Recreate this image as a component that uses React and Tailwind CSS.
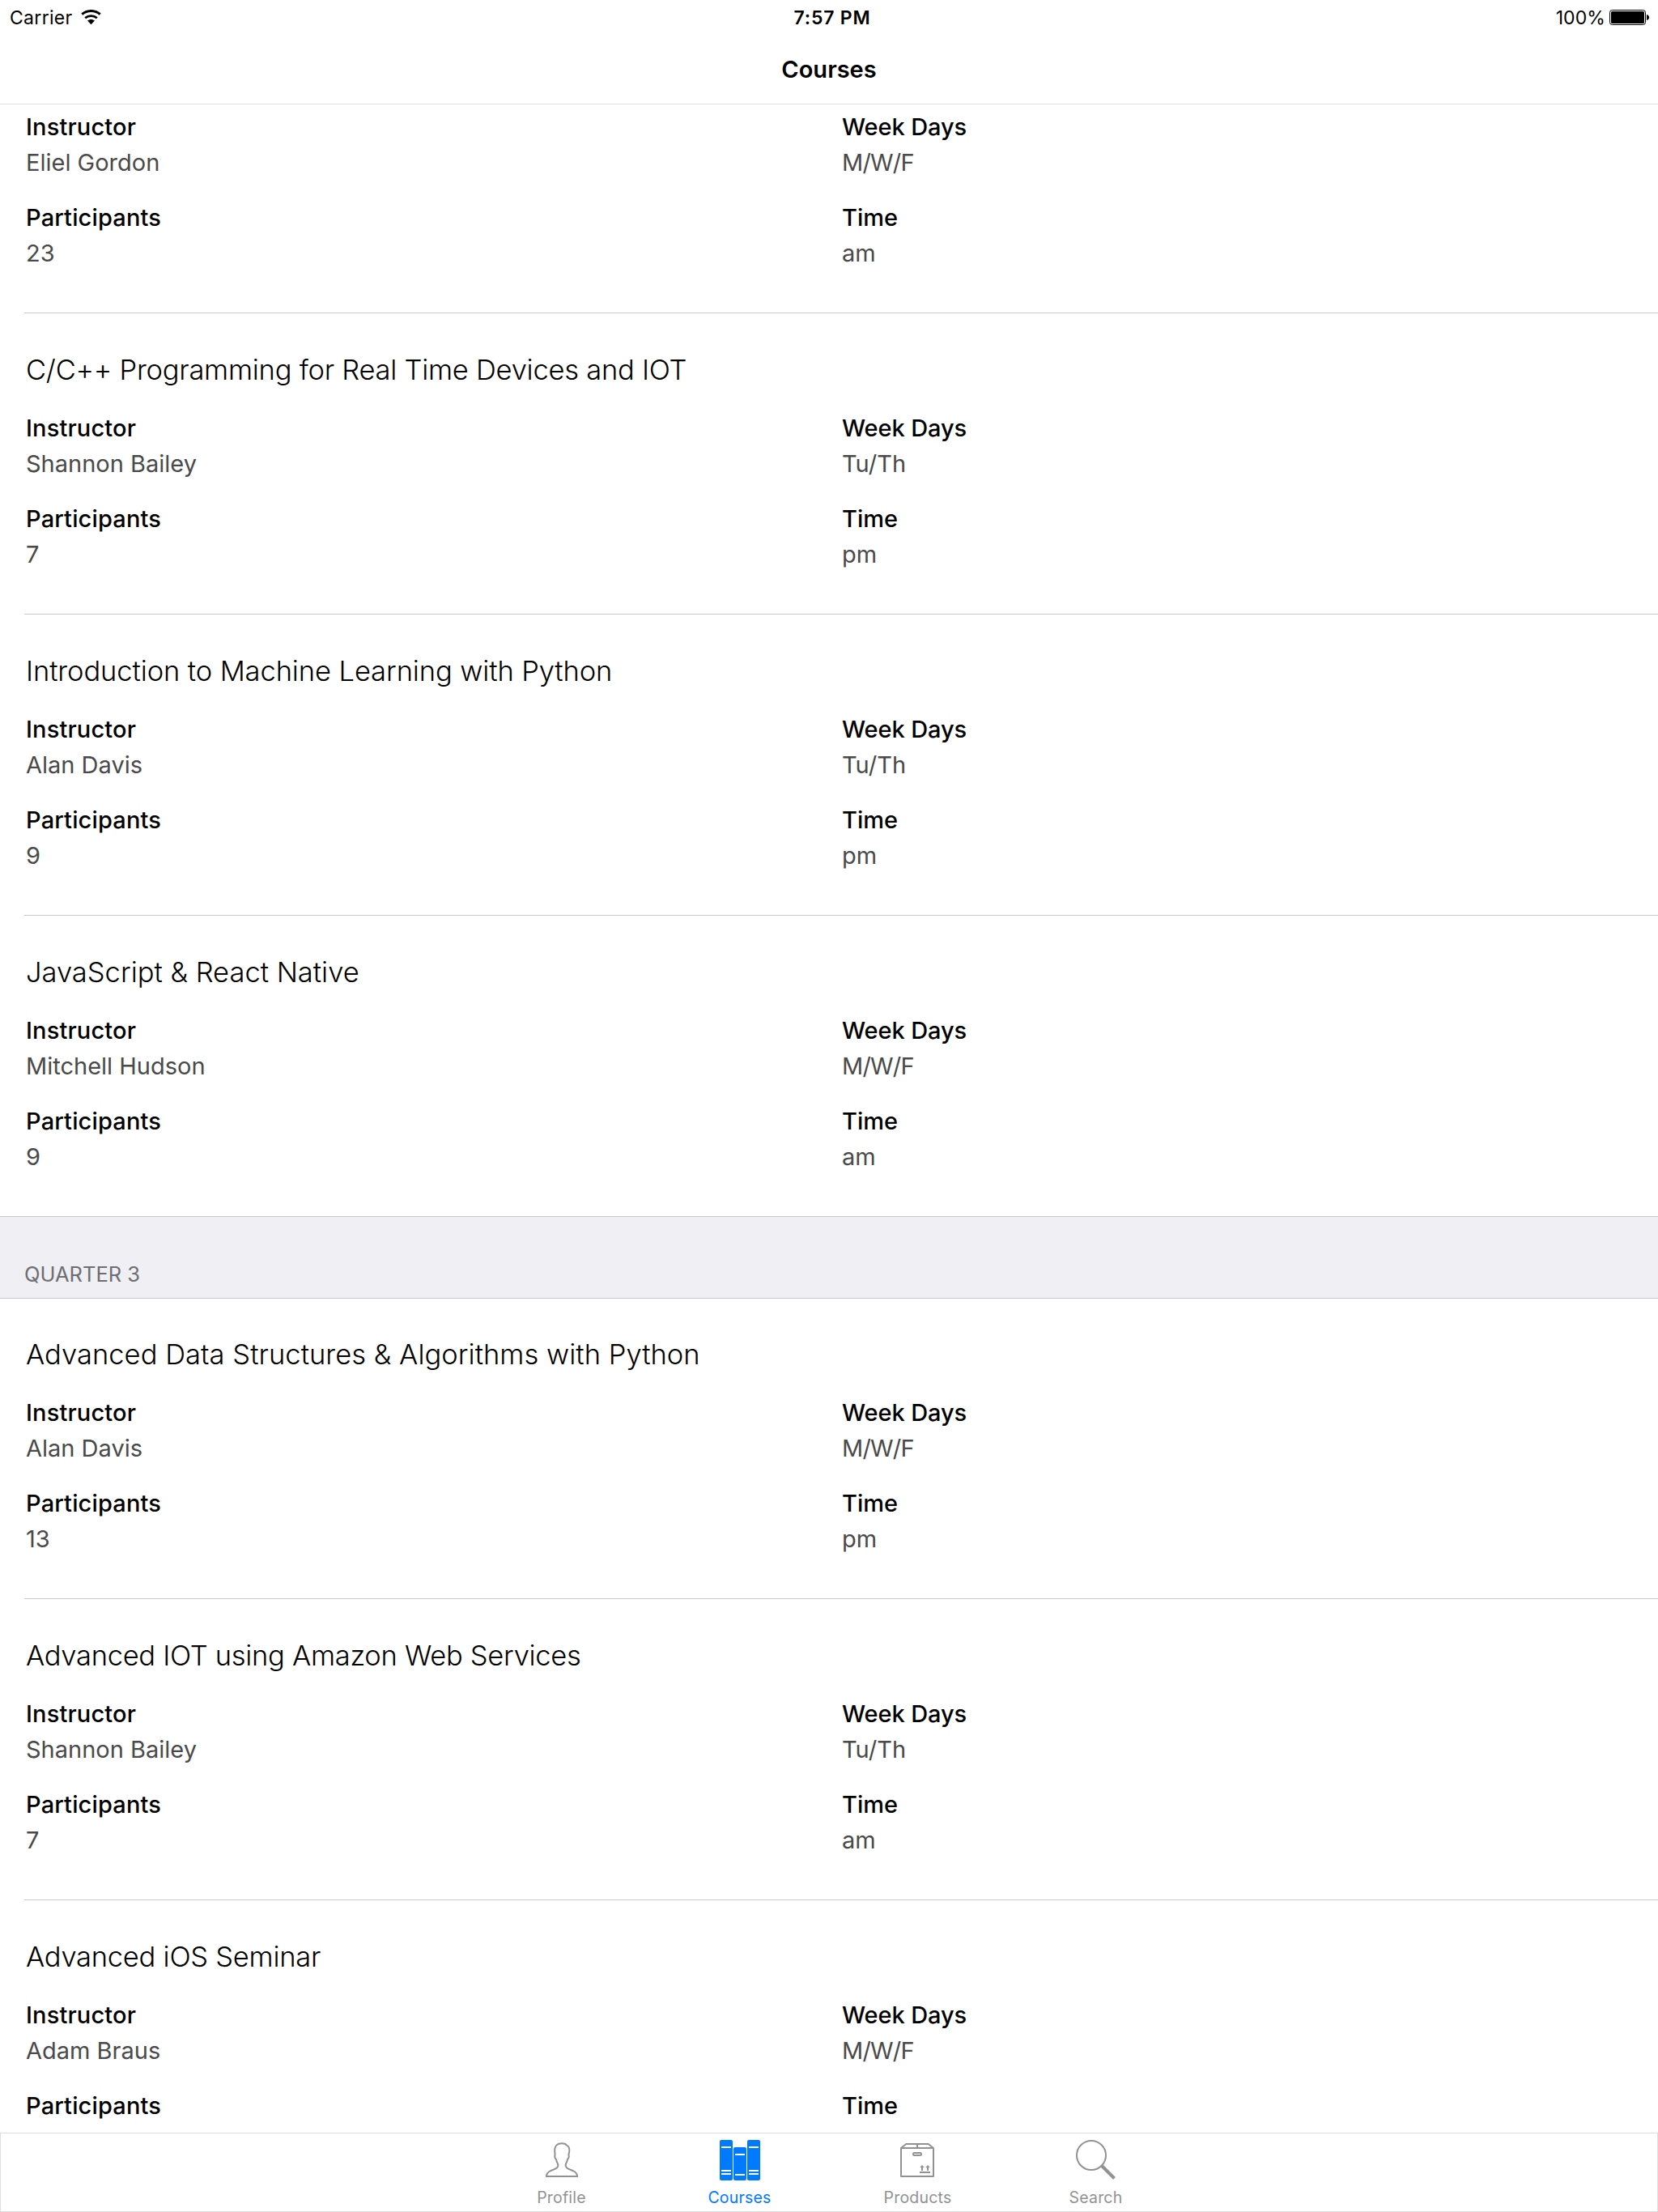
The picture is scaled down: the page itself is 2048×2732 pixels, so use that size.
import React from "react";

const quarterTwo = [
  { instructor: "Eliel Gordon", days: "M/W/F", participants: 23, time: "am" },
  { title: "C/C++ Programming for Real Time Devices and IOT", tracking: "tracking-[-0.25px]", instructor: "Shannon Bailey", days: "Tu/Th", participants: 7, time: "pm" },
  { title: "Introduction to Machine Learning with Python", tracking: "tracking-[-0.1px]", instructor: "Alan Davis", days: "Tu/Th", participants: 9, time: "pm" },
  { title: "JavaScript & React Native", tracking: "tracking-[0px]", instructor: "Mitchell Hudson", days: "M/W/F", participants: 9, time: "am" },
];

const quarterThree = [
  { title: "Advanced Data Structures & Algorithms with Python", tracking: "tracking-[0.04px]", instructor: "Alan Davis", days: "M/W/F", participants: 13, time: "pm" },
  { title: "Advanced IOT using Amazon Web Services", tracking: "tracking-[-0.29px]", instructor: "Shannon Bailey", days: "Tu/Th", participants: 7, time: "am" },
  { title: "Advanced iOS Seminar", tracking: "tracking-[-0.25px]", instructor: "Adam Braus", days: "M/W/F", participants: 17, time: "am" },
];

function Field({ label, value, labelTracking = "tracking-[0.15px]", valueTracking = "tracking-[0px]" }) {
  return (
    <div className="flex flex-col gap-1">
      <dt className={`text-[29px] leading-10 font-[530] text-black ${labelTracking}`}>{label}</dt>
      <dd className={`text-[29px] leading-10 font-normal text-[#4a4a4a] ${valueTracking}`}>{value}</dd>
    </div>
  );
}

function Course({ course, last }) {
  return (
    <article className="flex shrink-0 flex-col">
      {course.title && (
        <h2 className={`px-8 pt-12 pb-[30px] text-[34.5px] leading-11 font-[280] whitespace-nowrap text-black ${course.tracking}`}>
          {course.title}
        </h2>
      )}
      <dl className={course.title ? "grid grid-cols-2 gap-y-7 px-8 pb-[53px]" : "grid grid-cols-2 gap-y-7 px-8 pt-2 pb-[53px]"}>
        <Field label="Instructor" value={course.instructor} />
        <div className="pl-4">
          <Field label="Week Days" value={course.days} labelTracking="tracking-[-0.1px]" valueTracking={course.days === "M/W/F" ? "tracking-[-0.8px]" : "tracking-[0px]"} />
        </div>
        <Field label="Participants" value={course.participants} />
        <div className="pl-4">
          <Field label="Time" value={course.time} labelTracking="tracking-[0px]" />
        </div>
      </dl>
      <div className={last ? "h-px bg-[#c8c7cc]" : "ml-[30px] h-px bg-[#c8c7cc]"} />
    </article>
  );
}

function WifiIcon() {
  return (
    <svg className="h-[19px] w-[25px]" viewBox="0 0 25 19" fill="none" stroke="black">
      <path d="M1.3 5.6C7.6 .1 17.4 .1 23.7 5.6" strokeWidth="3" />
      <path d="M5.2 10.3C9.4 6.7 15.6 6.7 19.8 10.3" strokeWidth="2.7" />
      <path d="M8 13.6C10.6 11.5 14.4 11.5 17 13.6L12.5 18.2Z" fill="black" stroke="none" />
    </svg>
  );
}

function BatteryIcon() {
  return (
    <svg className="h-[19px] w-[49px]" viewBox="0 0 49 19">
      <rect x=".5" y=".5" width="44" height="18" rx="3" fill="none" stroke="black" />
      <rect x="2" y="2" width="41" height="15" rx="1.5" />
      <path d="M46 6c2 .4 3 1.800 3 3.500s-1 3.100-3 3.500z" />
    </svg>
  );
}

function ProfileIcon() {
  return (
    <svg className="size-[50px]" viewBox="0 0 50 50" fill="none" stroke="currentColor" strokeWidth="2">
      <path d="M6 45H44C44 41.500 42.500 39.800 39.300 38.300C36.500 36.900 33 36.300 31 34.300C29.300 32.500 29.400 30.500 30.300 28.800C31.300 27 31.800 25.500 32.100 23.600C33.400 23.200 34.300 20 33.400 18.200C34.600 14 34.600 10.500 33.300 8.500C32.500 7.300 31.500 7.600 30.700 6.300C28.800 3.900 21.500 3.500 18.500 6.400C15.500 9.300 15.900 14 16.600 18.200C15.700 20 16.500 23.200 17.900 23.800C18.200 25.500 18.700 27 19.700 28.800C20.600 30.500 20.700 32.500 19 34.300C17 36.300 13.500 36.900 10.700 38.300C7.500 39.800 6 41.500 6 45Z" />
    </svg>
  );
}

function BooksIcon() {
  return (
    <svg className="size-[50px]" viewBox="0 0 50 50" fill="currentColor">
      <rect width="16" height="50" rx="2" />
      <rect x="17" y="9" width="16" height="41" rx="2" />
      <rect x="34" width="16" height="50" rx="2" />
      <path d="M2 9H14M2 38H14M2 42H14M19 18H31M19 43H31M36 9H48M36 38H48M36 42H48" stroke="white" strokeWidth="2" />
    </svg>
  );
}

function BoxIcon() {
  return (
    <svg className="size-[50px]" viewBox="0 0 50 50" fill="none" stroke="currentColor" strokeWidth="2" strokeLinejoin="round">
      <path d="M4 10H44V45H4ZM4 10L10.300 5H37.700L44 10M24 5V10" />
      <rect x="19" y="16" width="10" height="3" rx="1.500" />
      <path d="M30 38V33M37 38V33M27 40H40" strokeLinejoin="miter" />
      <path d="M27.300 34L30 31L32.700 34ZM34.300 34L37 31L39.700 34Z" fill="currentColor" stroke="none" />
    </svg>
  );
}

function SearchIcon() {
  return (
    <svg className="size-[50px]" viewBox="0 0 50 50" fill="none" stroke="currentColor">
      <circle cx="19" cy="19" r="18" strokeWidth="2" />
      <path d="M32 32L47.500 47.500" strokeWidth="4" />
    </svg>
  );
}

const tabs = [
  { name: "Profile", Icon: ProfileIcon },
  { name: "Courses", Icon: BooksIcon, active: true },
  { name: "Products", Icon: BoxIcon },
  { name: "Search", Icon: SearchIcon },
];

export default function App() {
  return (
    <div className="flex h-[2732px] w-full flex-col overflow-hidden bg-white font-['Inter',sans-serif] text-black">
      <header className="flex h-[129px] shrink-0 flex-col border-b border-[#dedede]">
        <div className="grid h-10 grid-cols-3 items-center pr-[11px] pl-3 text-[23px] leading-10">
          <div className="flex items-center gap-2.5">
            <span className="pt-0.5 tracking-[0.3px]">Carrier</span>
            <WifiIcon />
          </div>
          <span className="pt-0.5 pl-[7px] text-center font-[560] tracking-[0.8px]">7:57 PM</span>
          <div className="flex items-center justify-end gap-[5px]">
            <span className="pt-0.5 tracking-[0.1px]">100%</span>
            <BatteryIcon />
          </div>
        </div>
        <h1 className="pt-[26px] text-center text-[29px] leading-10 font-semibold">Courses</h1>
      </header>

      <main className="flex min-h-0 flex-1 flex-col overflow-hidden">
        {quarterTwo.map((c, i) => (
          <Course key={c.title ?? c.instructor} course={c} last={i === quarterTwo.length - 1} />
        ))}
        <h3 className="relative -mb-px flex h-[101px] shrink-0 items-end border-b border-[#c8c7cc] bg-[#efeff4] px-[30px] pb-[11px] text-[25.5px] leading-9 text-[#6d6d72]">
          QUARTER 3
        </h3>
        {quarterThree.map((c) => (
          <Course key={c.title} course={c} />
        ))}
      </main>

      <nav className="flex h-[98px] shrink-0 justify-center border border-[#dedede]">
        {tabs.map(({ name, Icon, active }) => (
          <div
            key={name}
            className={active ? "flex w-[220px] flex-col items-center pt-2 text-[#007aff]" : "flex w-[220px] flex-col items-center pt-2 text-[#929292]"}
          >
            <Icon />
            <span className="pt-[9px] pr-px text-[19.5px] leading-6 tracking-[0.2px]">{name}</span>
          </div>
        ))}
      </nav>
    </div>
  );
}
